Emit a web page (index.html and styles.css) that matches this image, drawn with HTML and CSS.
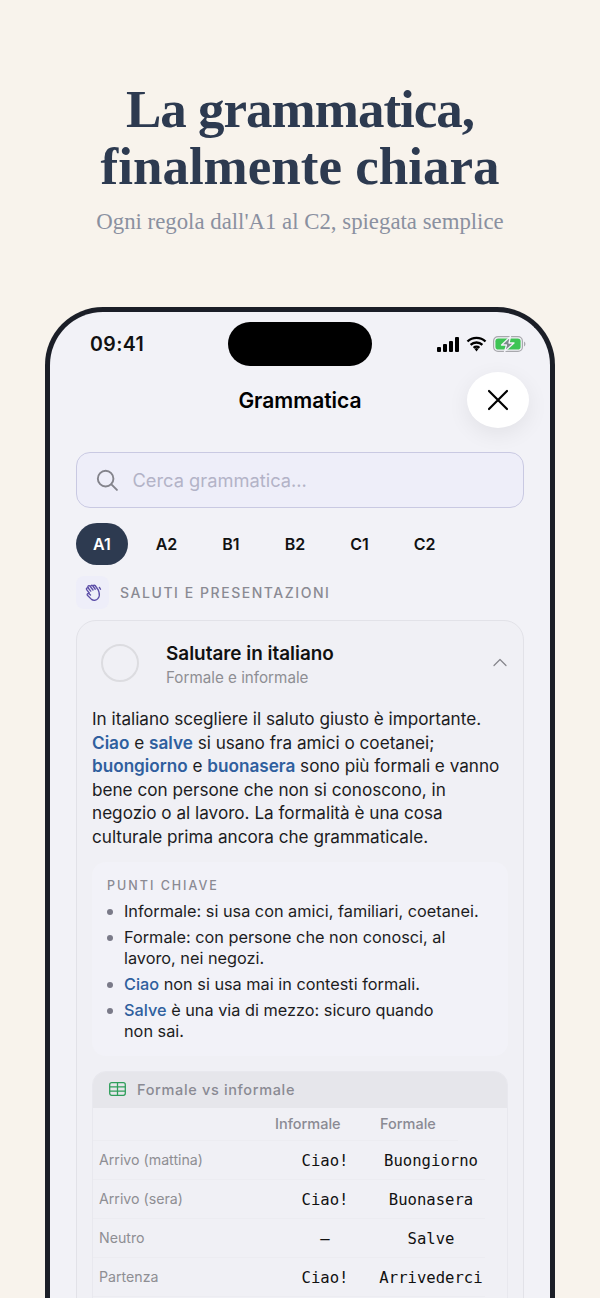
FILE: index.html
```html
<!DOCTYPE html>
<html lang="it">
<head>
<meta charset="utf-8">
<title>Grammatica</title>
<link rel="stylesheet" href="styles.css">
</head>
<body>
<header class="hero">
  <h1 class="hero-title"><span class="hero-line1">La grammatica,</span><br>finalmente chiara</h1>
  <p class="hero-sub">Ogni regola dall'A1 al C2, spiegata semplice</p>
</header>
<main class="phone">
  <div class="island"></div>
  <div class="status">
    <span class="time">09:41</span>
    <div class="status-icons">
      <svg width="23" height="15" viewBox="0 0 23 15"><rect x="0" y="10" width="4" height="5" rx="1"/><rect x="6" y="7" width="4" height="8" rx="1"/><rect x="12" y="4" width="4" height="11" rx="1"/><rect x="18" y="0" width="4" height="15" rx="1"/></svg>
      <svg width="21" height="16" viewBox="0 0 21 16"><path d="M1.5 5.5a13 13 0 0 1 18 0M4.6 8.8a8.6 8.6 0 0 1 11.8 0M7.6 11.8a4.3 4.3 0 0 1 5.8 0" fill="none" stroke="#000" stroke-width="2.4"/><path d="M8.6 12.9 10.5 15.6 12.4 12.9a3 3 0 0 0-3.8 0z"/></svg>
      <svg width="33" height="16" viewBox="0 0 33 16"><rect x=".6" y=".6" width="28.8" height="14.8" rx="4.4" fill="none" stroke="#a8a8ad" stroke-width="1.2"/><rect x="2.4" y="2.4" width="25.2" height="11.2" rx="2.8" fill="#3ec455"/><path d="M31 5.5c1 .4 1.4 1.400 1.400 2.500S32 10.100 31 10.500z" fill="#a8a8ad"/><path d="M17.500 .5 8.500 9h5l-2 6.500 9.500-8.500h-5z" fill="#7f8a8c" stroke="#f2f2f7" stroke-width="1.300" stroke-linejoin="round"/></svg>
    </div>
  </div>
  <div class="nav">
    <h2 class="nav-title">Grammatica</h2>
    <button class="close" type="button" aria-label="Chiudi">
      <svg width="24" height="24" viewBox="0 0 24 24" fill="none" stroke="#000" stroke-width="2.200" stroke-linecap="round"><path d="M3 3l18 18M21 3L3 21"/></svg>
    </button>
  </div>
  <div class="search">
    <svg width="22" height="22" viewBox="0 0 24 24" fill="none" stroke="#84848c" stroke-width="2.100" stroke-linecap="round"><circle cx="10.500" cy="10.500" r="8.500"/><path d="M16.800 16.800l6 6"/></svg>
    <span class="placeholder">Cerca grammatica...</span>
  </div>
  <nav class="levels">
    <span class="level active">A1</span>
    <span class="level">A2</span>
    <span class="level">B1</span>
    <span class="level">B2</span>
    <span class="level">C1</span>
    <span class="level">C2</span>
  </nav>
  <div class="section">
    <span class="section-icon">
      <svg width="18" height="18" viewBox="0 0 24 24" fill="none" stroke="#5d4fa8" stroke-width="1.800" stroke-linecap="round" stroke-linejoin="round"><path d="M7 12 3.500 7.500a1.500 1.500 0 0 1 2.400-1.800L9 9.500"/><path d="M6 5 5.500 4.500a1.500 1.500 0 0 1 2.400-1.800L12 8"/><path d="M9 2.800a1.500 1.500 0 0 1 2.400-.8L15 7"/><path d="M12.500 2.500a1.500 1.500 0 0 1 2.300-.5L19 8l1 3c1 3 .5 6-1.500 8.500s-6 3-8.500 1L4.500 15a1.500 1.500 0 0 1 2.200-2l2 1.800"/><path d="M20.500 4.500 22 7"/></svg>
    </span>
    <span class="section-label">SALUTI E PRESENTAZIONI</span>
  </div>
  <article class="card">
    <div class="card-head">
      <span class="check"></span>
      <div class="card-titles">
        <h3 class="card-title">Salutare in italiano</h3>
        <p class="card-sub">Formale e informale</p>
      </div>
      <svg class="chevron" width="14" height="9" viewBox="0 0 14 9" fill="none" stroke="#85858b" stroke-width="1.200" stroke-linecap="round" stroke-linejoin="round"><path d="M1 7.500 7 1.500l6 6"/></svg>
    </div>
    <p class="intro">In italiano scegliere il saluto giusto è importante. <b class="hl">Ciao</b> e <b class="hl">salve</b> si usano fra amici o coetanei; <b class="hl">buongiorno</b> e <b class="hl">buonasera</b> sono più formali e vanno bene con persone che non si conoscono, in negozio o al lavoro. La formalità è una cosa culturale prima ancora che grammaticale.</p>
    <section class="keys">
      <h4 class="keys-title">PUNTI CHIAVE</h4>
      <ul class="keys-list">
        <li>Informale: si usa con amici, familiari, coetanei.</li>
        <li>Formale: con persone che non conosci, al lavoro, nei negozi.</li>
        <li><span class="hl">Ciao</span> non si usa mai in contesti formali.</li>
        <li><span class="hl">Salve</span> è una via di mezzo: sicuro quando non&nbsp;sai.</li>
      </ul>
    </section>
    <section class="table">
      <div class="table-head">
        <svg width="17" height="14" viewBox="0 0 17 14" fill="none" stroke="#2f9e5b" stroke-width="1.300"><rect x=".7" y=".7" width="15.600" height="12.600" rx="2"/><path d="M.7 4.900h15.600M.7 9.100h15.600M8.500.7v12.600"/></svg>
        <span class="table-title">Formale vs informale</span>
      </div>
      <div class="row row-header"><span></span><span>Informale</span><span>Formale</span></div>
      <div class="row"><span class="label">Arrivo (mattina)</span><span class="val">Ciao!</span><span class="val">Buongiorno</span></div>
      <div class="row"><span class="label">Arrivo (sera)</span><span class="val">Ciao!</span><span class="val">Buonasera</span></div>
      <div class="row"><span class="label">Neutro</span><span class="val">—</span><span class="val">Salve</span></div>
      <div class="row"><span class="label">Partenza</span><span class="val">Ciao!</span><span class="val">Arrivederci</span></div>
    </section>
  </article>
</main>
</body>
</html>
```

FILE: styles.css
```css
* { box-sizing: border-box; }
html, body { margin: 0; height: 1298px; overflow: hidden; }
body { background: #f8f3ec; font-family: Inter, "Noto Sans", sans-serif; color: #111; }

.hero { padding-top: 81px; text-align: center; height: 307px; }
.hero-title { margin: 0; font-family: "Liberation Serif", serif; font-weight: 700; font-size: 53px; line-height: 57px; color: #2d3a50; }
.hero-line1 { letter-spacing: -1px; }
.hero-sub { margin: 12px 0 0; font-family: "Liberation Serif", serif; font-size: 22.800px; line-height: 30px; color: #8a90a0; }

.phone { position: relative; margin: 0 45px; height: 991px; overflow: hidden; background: #f2f2f7; border: 5px solid #1b1e27; border-bottom: 0; border-radius: 58px 58px 0 0; }
.island { position: absolute; left: 178px; top: 10px; width: 144px; height: 44px; border-radius: 22px; background: #000; }

.status { display: flex; justify-content: space-between; align-items: center; height: 44px; margin-top: 10px; padding: 0 24px 0 40px; }
.time { font-size: 19.500px; font-weight: 600; letter-spacing: .4px; color: #111; }
.status-icons { display: flex; align-items: center; gap: 6px; }

.nav { position: relative; height: 56px; margin-top: 6px; display: flex; align-items: center; justify-content: center; }
.nav-title { margin: 0; font-size: 21px; font-weight: 600; color: #000; }
.close { position: absolute; right: 21px; top: 0; width: 62px; height: 56px; padding: 0; border: 0; border-radius: 50%; background: #fff; display: flex; align-items: center; justify-content: center; box-shadow: 0 6px 22px rgba(0,0,0,.07); }

.search { margin: 24px 26px 0; height: 56px; display: flex; align-items: center; gap: 14.500px; padding: 0 19px; background: #eeeef9; border: 1.500px solid #c9c9e2; border-radius: 14px; }
.placeholder { font-size: 18.300px; color: #b3b3c7; }

.levels { display: flex; gap: 11px; margin: 15px 26px 0; }
.level { height: 42px; padding: 0 17px; display: flex; align-items: center; border-radius: 21px; font-size: 16px; font-weight: 600; color: #111; }
.level.active { background: #2d3a50; color: #fff; }

.section { display: flex; align-items: center; gap: 11px; margin: 11px 26px 0; }
.section-icon { width: 33px; height: 33px; border-radius: 8px; background: #eeeef9; display: flex; align-items: center; justify-content: center; }
.section-label { font-size: 14px; font-weight: 500; letter-spacing: 1.550px; color: #8a8a93; }

.card { margin: 11px 26px 0; padding: 0 15px 40px; background: #f0f0f5; border: 1.500px solid #e2e2e8; border-radius: 20px; }
.card-head { display: flex; align-items: center; height: 83px; }
.check { width: 38px; height: 38px; margin-left: 9px; border-radius: 50%; border: 2px solid #dcdce0; flex: none; }
.card-titles { margin-left: 27px; flex: 1; padding-top: 4px; }
.card-title { margin: 0; font-size: 18.900px; font-weight: 600; line-height: 24px; color: #111; }
.card-sub { margin: 2px 0 0; font-size: 15.200px; line-height: 20px; color: #8e8e93; }
.chevron { margin-right: 1px; }

.intro { margin: 3px 0 0; font-size: 17.150px; line-height: 23.500px; color: #1c1c1e; }
.hl { color: #2f5f9e; font-weight: 500; }
b.hl { font-weight: 600; }

.keys { margin-top: 14px; padding: 16px 15px 14px; background: #f2f2f8; border-radius: 14px; }
.keys-title { margin: 0 0 7px; font-size: 12.500px; font-weight: 500; line-height: 16px; letter-spacing: 2px; color: #8a8a93; }
.keys-list { margin: 0; padding: 0; list-style: none; }
.keys-list li { position: relative; padding-left: 17px; margin-bottom: 5px; font-size: 16.300px; line-height: 21px; color: #1c1c1e; }
.keys-list li:last-child { margin-bottom: 0; }
.keys-list li::before { content: ""; position: absolute; left: 0; top: 8px; width: 6px; height: 6px; border-radius: 50%; background: #7a7a88; }

.table { margin-top: 15px; border: 1px solid #e8e8ee; border-radius: 14px; overflow: hidden; padding-bottom: 30px; }
.table-head { height: 36px; display: flex; align-items: center; gap: 11px; padding: 0 0 2px 16px; background: #e6e6eb; }
.table-title { font-size: 14.500px; font-weight: 500; letter-spacing: .65px; color: #8a8a93; }
.row { display: grid; grid-template-columns: 172px 108px 104px; width: 392px; height: 39px; align-items: center; padding-left: 6px; border-bottom: 1px solid #ececf1; }
.row-header { grid-template-columns: 176px 105px 1fr; width: 365px; height: 33px; padding-bottom: 2px; font-size: 14.500px; font-weight: 500; color: #8a8a93; }
.label { padding-bottom: 2px; font-size: 14.200px; color: #8e8e93; }
.val { padding-top: 2px; text-align: center; font-family: "DejaVu Sans Mono", monospace; font-size: 15.600px; color: #111; }
```
